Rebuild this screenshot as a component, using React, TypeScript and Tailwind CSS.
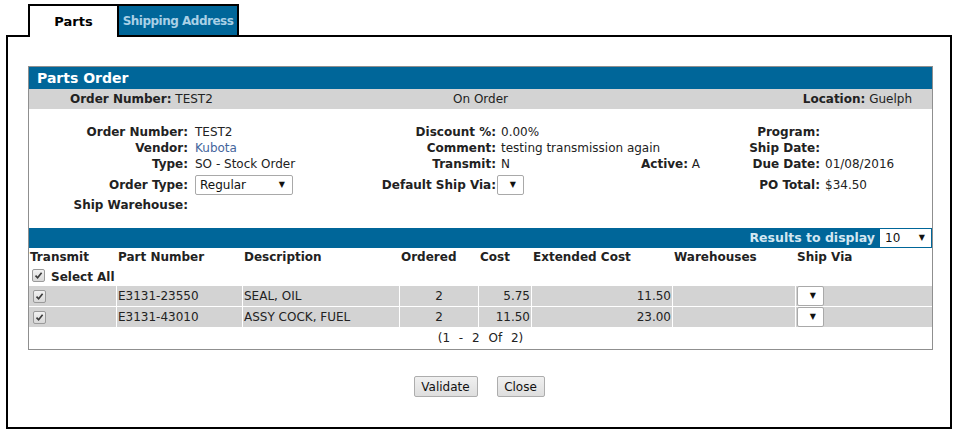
const font = { fontFamily: '"DejaVu Sans", Verdana, sans-serif' };

const Check = () => (
  <span className="inline-flex h-[13px] w-[13px] items-center justify-center rounded-[2px] border border-[#9a9a9a] bg-gradient-to-b from-[#f2f2f2] to-[#d8d8d8]">
    <svg width="9" height="9" viewBox="0 0 9 9">
      <path d="M1.5 4.6 L3.6 6.8 L7.6 1.8" fill="none" stroke="#3a3a3a" strokeWidth="1.6" />
    </svg>
  </span>
);

const Select = ({ value, w }: { value?: string; w: string }) => (
  <div
    className={`flex h-[20px] ${w} items-center justify-between rounded-[2px] border border-[#a9a9a9] bg-white pl-[4px] pr-[7px] text-[12px] text-[#111]`}
  >
    <span>{value ?? ""}</span>
    <span className="text-[8px] leading-none">▼</span>
  </div>
);

type Row = { part: string; desc: string; ordered: string; cost: string; ext: string };

const rows: Row[] = [
  { part: "E3131-23550", desc: "SEAL, OIL", ordered: "2", cost: "5.75", ext: "11.50" },
  { part: "E3131-43010", desc: "ASSY COCK, FUEL", ordered: "2", cost: "11.50", ext: "23.00" },
];

// column edges taken from the grey cells
const cols = "grid grid-cols-[87px_125px_156px_78px_52px_140px_122px_1fr] gap-x-px";

export default function App() {
  return (
    <div className="h-[433px] w-[956px] bg-white text-[12px] text-[#222]" style={font}>
      <div className="flex pl-[28px] pt-[4px]">
        <div className="relative z-10 mb-[-2px] flex h-[33px] w-[91px] items-center justify-center border-2 border-b-0 border-black bg-white text-[13px] font-bold text-black">
          Parts
        </div>
        <div className="flex h-[31px] w-[120px] items-center justify-center whitespace-nowrap border-2 border-b-0 border-l-0 border-black bg-[#006699] text-[12px] font-bold tracking-[-0.5px] text-[#a9d0e6]">
          Shipping Address
        </div>
      </div>

      <div className="ml-[6px] h-[394px] w-[946px] border-2 border-black">
        <div className="ml-[20px] mt-[29px] w-[905px] border border-[#8f8f8f]">
          <div className="flex h-[22px] items-center bg-[#006699] pl-[8px] text-[14px] font-bold text-white">
            Parts Order
          </div>
          <div className="flex h-[20px] items-center bg-[#d3d3d3] text-[12px]">
            <div className="w-[300px] pl-[41px]">
              <b>Order Number:</b> TEST2
            </div>
            <div className="flex-1 text-center">On Order</div>
            <div className="w-[300px] pr-[20px] text-right">
              <b>Location:</b> Guelph
            </div>
          </div>

          <div className="flex flex-col pb-[15px] pt-[14px]">
            <div className="flex h-[17px] items-center">
              <span className="w-[159px] text-right font-bold">Order Number:</span>
              <span className="w-[188px] pl-[7px]">TEST2</span>
              <span className="w-[120px] text-right font-bold">Discount %:</span>
              <span className="w-[140px] whitespace-nowrap pl-[5px]">0.00%</span>
              <span className="w-[74px]" />
              <span className="w-[110px] text-right font-bold">Program:</span>
            </div>
            <div className="flex h-[16px] items-center">
              <span className="w-[159px] text-right font-bold">Vendor:</span>
              <span className="w-[188px] pl-[7px] text-[#45659c]">Kubota</span>
              <span className="w-[120px] text-right font-bold">Comment:</span>
              <span className="w-[140px] whitespace-nowrap pl-[5px]">testing transmission again</span>
              <span className="w-[74px]" />
              <span className="w-[110px] text-right font-bold">Ship Date:</span>
            </div>
            <div className="flex h-[16px] items-center">
              <span className="w-[159px] text-right font-bold">Type:</span>
              <span className="w-[188px] pl-[7px]">SO - Stock Order</span>
              <span className="w-[120px] text-right font-bold">Transmit:</span>
              <span className="w-[140px] whitespace-nowrap pl-[5px]">N</span>
              <span className="w-[74px] whitespace-nowrap pl-[5px]">
                <b>Active:</b> A
              </span>
              <span className="w-[110px] text-right font-bold">Due Date:</span>
              <span className="pl-[5px]">01/08/2016</span>
            </div>
            <div className="mt-[2px] flex h-[21px] items-center">
              <span className="w-[159px] text-right font-bold">Order Type:</span>
              <span className="w-[188px] pl-[7px]">
                <Select value="Regular" w="w-[98px]" />
              </span>
              <span className="w-[120px] text-right font-bold">Default Ship Via:</span>
              <span className="w-[140px] pl-[1px]">
                <Select w="w-[27px]" />
              </span>
              <span className="w-[74px]" />
              <span className="w-[110px] text-right font-bold">PO Total:</span>
              <span className="pl-[5px]">$34.50</span>
            </div>
            <div className="mt-[2px] flex h-[16px] items-center">
              <span className="w-[159px] text-right font-bold">Ship Warehouse:</span>
            </div>
          </div>

          <div className="flex h-[20px] items-center justify-end bg-[#006699] pr-[1px]">
            <span className="mr-[5px] text-[12.5px] font-bold text-[#d3e7f2]">Results to display</span>
            <div className="flex h-[18px] w-[51px] items-center justify-between bg-white pl-[5px] pr-[6px] text-[12px] text-[#111]">
              <span>10</span>
              <span className="text-[8px]">▼</span>
            </div>
          </div>

          <div className={`${cols} h-[16px] items-center font-bold`}>
            <span className="pl-[1px]">Transmit</span>
            <span className="pl-[1px]">Part Number</span>
            <span className="pl-[1px]">Description</span>
            <span className="pl-[1px]">Ordered</span>
            <span className="pl-[1px]">Cost</span>
            <span className="whitespace-nowrap pl-[1px]">Extended Cost</span>
            <span className="pl-[1px]">Warehouses</span>
            <span className="pl-[1px]">Ship Via</span>
          </div>
          <div className="flex h-[22px] items-center gap-[6px] pl-[3px] font-bold">
            <Check />
            <span className="pt-[3px]">Select All</span>
          </div>

          <div className="flex flex-col gap-px">
            {rows.map((r) => (
              <div key={r.part} className={`${cols} h-[20px]`}>
                <span className="flex items-center bg-[#d3d3d3] pl-[4px]">
                  <Check />
                </span>
                <span className="flex items-center bg-[#d3d3d3] pl-[1px]">{r.part}</span>
                <span className="flex items-center bg-[#d3d3d3] pl-[1px]">{r.desc}</span>
                <span className="flex items-center justify-center bg-[#d3d3d3]">{r.ordered}</span>
                <span className="flex items-center justify-end bg-[#d3d3d3] pr-[1px]">{r.cost}</span>
                <span className="flex items-center justify-end bg-[#d3d3d3] pr-[1px]">{r.ext}</span>
                <span className="bg-[#d3d3d3]" />
                <span className="flex items-center bg-[#d3d3d3] pl-[1px]">
                  <Select w="w-[27px]" />
                </span>
              </div>
            ))}
          </div>

          <div className="flex h-[22px] items-center justify-center [word-spacing:5px]">(1 - 2 Of 2)</div>
        </div>

        <div className="mt-[26px] flex justify-center gap-[19px]">
          <button className="h-[21px] w-[64px] rounded-[2px] border border-[#adadad] bg-gradient-to-b from-[#f0f0f0] to-[#dedede] text-[12px] text-[#111]">
            Validate
          </button>
          <button className="h-[21px] w-[48px] rounded-[2px] border border-[#adadad] bg-gradient-to-b from-[#f0f0f0] to-[#dedede] text-[12px] text-[#111]">
            Close
          </button>
        </div>
      </div>
    </div>
  );
}
